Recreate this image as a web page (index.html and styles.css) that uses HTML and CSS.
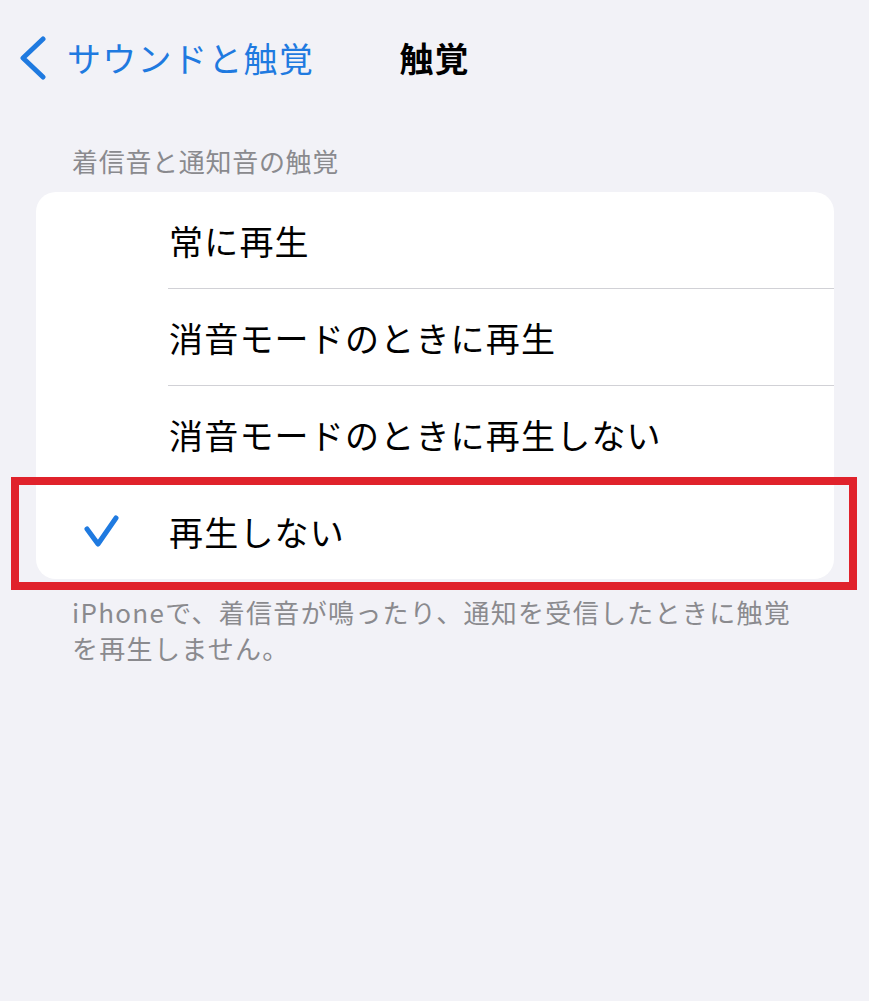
FILE: index.html
```html
<!DOCTYPE html>
<html lang="ja">
<head>
<meta charset="utf-8">
<title>触覚</title>
<link rel="stylesheet" href="styles.css">
</head>
<body>
<div class="page">
  <header class="nav">
    <div class="nav-left">
      <svg class="chevron" width="28" height="44" viewBox="0 0 28 44"><path d="M24 3 L4 22 L24 41" fill="none" stroke="#1f7ae0" stroke-width="5" stroke-linecap="round" stroke-linejoin="round"/></svg>
      <span class="back-label">サウンドと触覚</span>
    </div>
    <h1 class="nav-title">触覚</h1>
    <div class="nav-right"></div>
  </header>

  <div class="section-header">着信音と通知音の触覚</div>
  <div class="card">
    <div class="row"><div class="check-slot"></div><div class="label">常に再生</div></div>
    <div class="row"><div class="check-slot"></div><div class="label">消音モードのときに再生</div></div>
    <div class="row"><div class="check-slot"></div><div class="label">消音モードのときに再生しない</div></div>
    <div class="row last"><div class="check-slot">
      <svg class="check" width="40" height="36" viewBox="0 0 40 36"><path d="M5 16 L16 31 L34 5" fill="none" stroke="#1f7ae0" stroke-width="5" stroke-linecap="round" stroke-linejoin="round"/></svg>
    </div><div class="label">再生しない</div></div>
  </div>
  <p class="footer">iPhoneで、着信音が鳴ったり、通知を受信したときに触覚を再生しません。</p>

  <div class="highlight"></div>
</div>
</body>
</html>
```
FILE: styles.css
```css
html, body {
  margin: 0;
  padding: 0;
  background: #f2f2f7;
}
.page {
  position: relative;
  width: 869px;
  min-height: 1001px;
  font-family: "Noto Sans CJK JP", "Noto Sans", sans-serif;
}
.nav {
  height: 116px;
  display: grid;
  grid-template-columns: 1fr auto 1fr;
  align-items: center;
}
.nav-left {
  display: flex;
  align-items: center;
  padding-left: 19px;
  gap: 20px;
}
.chevron { display: block; }
.back-label {
  color: #1f7ae0;
  font-size: 34px;
  line-height: 44px;
  letter-spacing: 1.3px;
}
.nav-title {
  margin: 0;
  font-size: 34px;
  font-weight: 700;
  line-height: 44px;
  color: #000;
  letter-spacing: 1px;
}
.section-header {
  padding: 30px 0 0 72px;
  font-size: 26px;
  line-height: 30px;
  color: #8a8a8e;
  margin-bottom: 16px;
  letter-spacing: 0.7px;
}
.card {
  margin: 0 35px 0 36px;
  background: #fff;
  border-radius: 20px;
  overflow: hidden;
}
.row {
  display: flex;
  align-items: stretch;
}
.check-slot {
  width: 132px;
  flex: none;
  display: flex;
  align-items: center;
  padding-left: 46px;
  box-sizing: border-box;
}
.check { display: block; }
.label {
  flex: 1;
  height: 96px;
  display: flex;
  align-items: center;
  border-bottom: 1px solid #d1d1d6;
  font-size: 34px;
  color: #000;
  padding-left: 1px;
  letter-spacing: 1.2px;
}
.row.last .label { border-bottom: none; }
.footer {
  margin: 0;
  padding: 15px 66px 0 72px;
  font-size: 26px;
  line-height: 36px;
  color: #8a8a8e;
  letter-spacing: 1.3px;
}
.highlight {
  position: absolute;
  left: 11px;
  top: 477px;
  width: 846px;
  height: 113px;
  box-sizing: border-box;
  border: 8px solid #e0222b;
}
```
